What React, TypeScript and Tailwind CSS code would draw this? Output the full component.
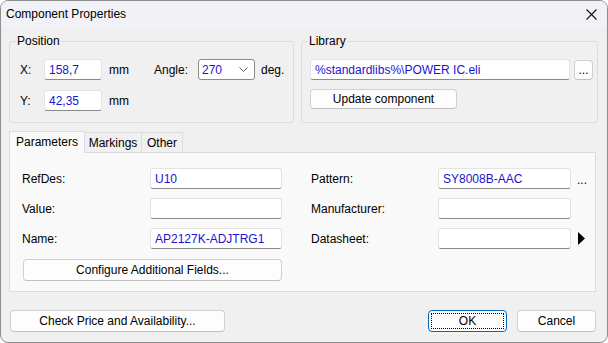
import React from "react";

const font = { fontFamily: '"Liberation Sans", Arial, sans-serif' };

const Field = ({ value = "", w }: { value?: string; w: string }) => (
  <div
    className={`${w} h-[21px] bg-white border border-[#e3e3e3] border-b-[#8a8a8a] rounded-[3px] pl-[4px] flex items-center text-[12px] text-[#1a14d2] leading-none`}
  >
    {value}
  </div>
);

const Btn = ({
  text,
  className = "",
  focused = false,
}: {
  text: string;
  className?: string;
  focused?: boolean;
}) => (
  <button
    className={`bg-[#fdfdfd] border rounded-[4px] text-[12px] text-black leading-none flex items-center justify-center ${
      focused ? "border-[#0067c0] p-[2px]" : "border-[#d0d0d0] border-b-[#c0c0c0]"
    } ${className}`}
  >
    {focused ? (
      <span className="w-full h-full border border-dotted border-black flex items-center justify-center">
        {text}
      </span>
    ) : (
      text
    )}
  </button>
);

const Group = ({
  title,
  className = "",
  children,
}: {
  title: string;
  className?: string;
  children: React.ReactNode;
}) => (
  <fieldset className={`border border-[#dcdcdc] rounded-[3px] ${className}`}>
    <legend className="ml-[6px] px-[1px] text-[12px] leading-[14px]">{title}</legend>
    {children}
  </fieldset>
);

export default function App() {
  return (
    <div
      style={font}
      className="w-[608px] h-[343px] bg-[#f0f0f0] border border-[#8e8e8e] rounded-[8px] overflow-hidden flex flex-col text-black text-[12px]"
    >
      {/* title bar */}
      <div className="h-[26px] bg-[#f1f2f8] flex items-center justify-between pl-[5px] pr-[10px]">
        <span className="text-[12px]">Component Properties</span>
        <svg width="11" height="11" viewBox="0 0 11 11">
          <path d="M0.5 0.5 L10.5 10.5 M10.5 0.5 L0.5 10.5" stroke="#111" strokeWidth="1.1" />
        </svg>
      </div>

      <div className="flex flex-col pt-[7px] pl-[8px] pr-[9px]">
        <div className="flex gap-[7px]">
          <Group title="Position" className="w-[285px] h-[89px]">
            <div className="pl-[10px] pt-[11px] flex flex-col gap-[10px]">
              <div className="flex items-center h-[21px]">
                <span className="w-[24px]">X:</span>
                <Field value="158,7" w="w-[58px]" />
                <span className="ml-[7px] w-[45px]">mm</span>
                <span className="w-[44px]">Angle:</span>
                <div className="w-[57px] h-[21px] bg-white border border-[#8a8a8a] rounded-[3px] pl-[3px] pr-[6px] flex items-center justify-between text-[#1a14d2]">
                  <span>270</span>
                  <svg width="9" height="5" viewBox="0 0 9 5">
                    <path d="M0.5 0.5 L4.5 4.5 L8.5 0.5" fill="none" stroke="#555" strokeWidth="1" />
                  </svg>
                </div>
                <span className="ml-[6px]">deg.</span>
              </div>
              <div className="flex items-center h-[21px]">
                <span className="w-[24px]">Y:</span>
                <Field value="42,35" w="w-[58px]" />
                <span className="ml-[7px]">mm</span>
              </div>
            </div>
          </Group>

          <Group title="Library" className="flex-1 h-[89px]">
            <div className="pl-[8px] pt-[11px] flex flex-col">
              <div className="flex items-center">
                <Field value="%standardlibs%\POWER IC.eli" w="w-[260px]" />
                <Btn text="..." className="ml-[4px] w-[19px] h-[20px]" />
              </div>
              <Btn text="Update component" className="mt-[9px] w-[147px] h-[20px]" />
            </div>
          </Group>
        </div>

        {/* tabs */}
        <div className="mt-[8px] flex items-end h-[21px]">
          <div className="relative z-10 mb-[-1px] w-[76px] h-[22px] bg-[#f9f9f9] border border-b-0 border-[#dcdcdc] flex items-center justify-center pb-[2px]">
            Parameters
          </div>
          <div className="w-[57px] h-[20px] border border-l-0 border-b-0 border-[#dcdcdc] bg-[#f0f0f0] flex items-center justify-center">
            Markings
          </div>
          <div className="w-[41px] h-[20px] border border-l-0 border-b-0 border-[#dcdcdc] bg-[#f0f0f0] flex items-center justify-center">
            Other
          </div>
        </div>
        <div className="w-[587px] h-[140px] bg-[#f9f9f9] border border-[#dcdcdc] pt-[15px] pl-[12px] flex">
          <div className="flex flex-col gap-[9px]">
            {[
              ["RefDes:", "U10"],
              ["Value:", ""],
              ["Name:", "AP2127K-ADJTRG1"],
            ].map(([l, v]) => (
              <div key={l} className="flex items-center h-[21px]">
                <span className="w-[128px]">{l}</span>
                <Field value={v} w="w-[132px]" />
              </div>
            ))}
            <Btn text="Configure Additional Fields..." className="mt-[1px] ml-[1px] w-[259px] h-[22px]" />
          </div>
          <div className="ml-[29px] flex flex-col gap-[9px]">
            {[
              ["Pattern:", "SY8008B-AAC"],
              ["Manufacturer:", ""],
              ["Datasheet:", ""],
            ].map(([l, v], i) => (
              <div key={l} className="flex items-center h-[21px]">
                <span className="w-[127px]">{l}</span>
                <Field value={v} w="w-[133px]" />
                {i === 0 && <span className="ml-[6px] mt-[3px]">...</span>}
                {i === 2 && (
                  <svg className="ml-[7px]" width="7" height="13" viewBox="0 0 7 13">
                    <polygon points="0,0 7,6.5 0,13" fill="#000" />
                  </svg>
                )}
              </div>
            ))}
          </div>
        </div>

        {/* bottom buttons */}
        <div className="mt-[18px] flex items-center w-[587px]">
          <Btn text="Check Price and Availability..." className="ml-[1px] w-[215px] h-[22px]" />
          <div className="ml-auto flex gap-[10px]">
            <Btn text="OK" focused className="w-[79px] h-[22px]" />
            <Btn text="Cancel" className="w-[79px] h-[22px]" />
          </div>
        </div>
      </div>
    </div>
  );
}
